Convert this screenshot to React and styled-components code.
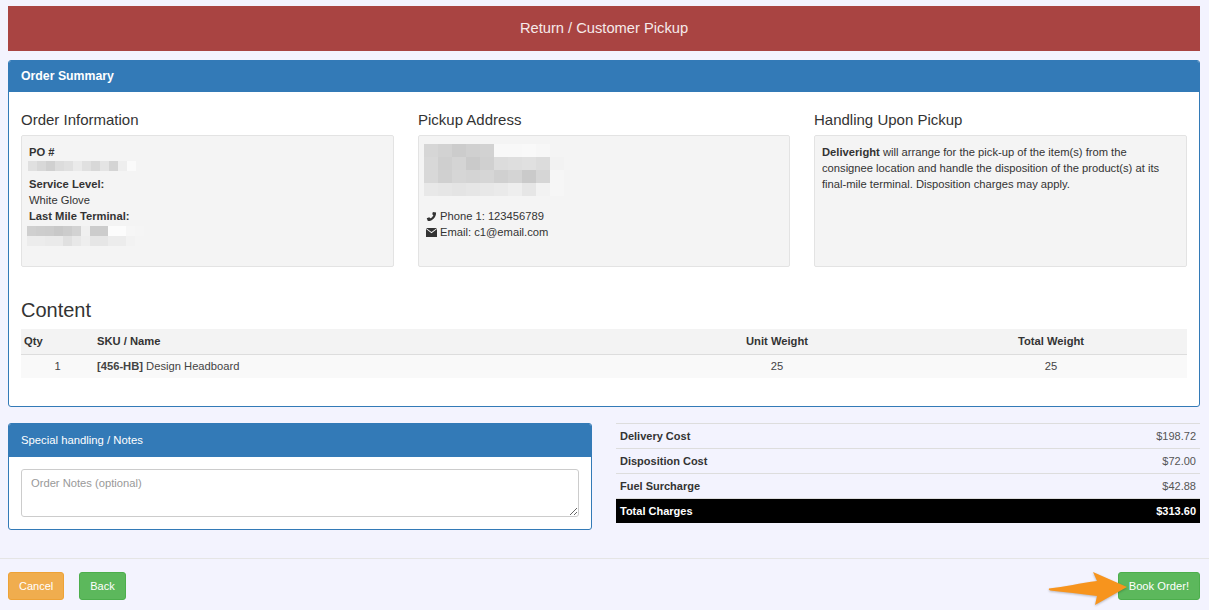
import React from "react";
import styled, { createGlobalStyle } from "styled-components";

const GlobalStyle = createGlobalStyle`
  html, body {
    margin: 0;
    padding: 0;
    background: #f3f3fe;
  }
  body {
    font-family: "Liberation Sans", Arial, sans-serif;
    font-size: 11.2px;
    line-height: 16px;
    color: #333;
  }
  * {
    box-sizing: border-box;
  }
`;

const Page = styled.div`
  width: 1209px;
  height: 610px;
  overflow: hidden;
  padding-top: 6px;
`;

const Content = styled.div`
  padding: 0 9px 0 8px;
`;

const Banner = styled.div`
  height: 45px;
  padding-bottom: 1px;
  background: #a94442;
  color: #f6eaea;
  font-size: 14.7px;
  display: flex;
  align-items: center;
  justify-content: center;
  margin-bottom: 9px;
`;

const Panel = styled.div`
  background: #fff;
  border: 1px solid #337ab7;
  border-radius: 3px;
  overflow: hidden;
  height: ${(p) => p.$height}px;
`;

const PanelHeading = styled.div`
  background: #337ab7;
  color: #fff;
  height: ${(p) => p.$height}px;
  padding: 0 12px 2px;
  display: flex;
  align-items: center;
  font-size: ${(p) => (p.$bold ? "12.3px" : "11.3px")};
  font-weight: ${(p) => (p.$bold ? "bold" : "normal")};
`;

const SummaryBody = styled.div`
  padding: 10px 12px 0;
`;

const Columns = styled.div`
  display: grid;
  grid-template-columns: 373px 372px 373px;
  gap: 24px;
`;

const ColumnTitle = styled.h4`
  margin: 0 0 6px;
  height: 27px;
  padding-top: 8px;
  font-size: 15px;
  line-height: 19px;
  font-weight: normal;
  color: #333;
`;

const Well = styled.div`
  height: 132px;
  background: #f4f4f4;
  border: 1px solid #e3e3e3;
  border-radius: 2px;
  padding: 8px 14px 8px 7px;
`;

const Line = styled.div`
  height: 16px;
  white-space: nowrap;
`;

const Blur = styled.div`
  display: grid;
  grid-template-columns: repeat(${(p) => p.$cols}, ${(p) => p.$size}px);
  grid-auto-rows: ${(p) => p.$rowHeight}px;
  height: ${(p) => p.$height}px;
  margin-left: ${(p) => p.$left || 0}px;
  margin-top: ${(p) => p.$top || 0}px;
  margin-bottom: ${(p) => p.$after || 0}px;
`;

const BlurCell = styled.div`
  background: ${(p) => p.$shade};
`;

const IconLine = styled(Line)`
  display: flex;
  align-items: center;
  gap: 3px;
`;

const Glyph = styled.svg`
  width: 11px;
  height: 11px;
  fill: #333;
  flex: none;
`;

const ContentTitle = styled.h3`
  margin: 32px 0 8px;
  font-size: 20px;
  line-height: 22px;
  font-weight: normal;
  color: #333;
`;

const Table = styled.table`
  width: 100%;
  border-collapse: collapse;
  table-layout: fixed;
`;

const HeadCell = styled.th`
  height: 25px;
  padding: 0 3px;
  background: #f3f3f3;
  border-bottom: 1px solid #ddd;
  font-weight: bold;
  text-align: ${(p) => p.$align || "left"};
`;

const BodyCell = styled.td`
  height: 24px;
  padding: 0 3px;
  background: #f9f9f9;
  color: #444;
  text-align: ${(p) => p.$align || "left"};
`;

const BottomRow = styled.div`
  display: grid;
  grid-template-columns: 584px 584px;
  gap: 24px;
  margin-top: 16px;
`;

const NotesBody = styled.div`
  padding: 12px 12px 0;
`;

const Notes = styled.textarea`
  display: block;
  width: 558px;
  height: 48px;
  padding: 5px 9px;
  border: 1px solid #ccc;
  border-radius: 3px;
  font: 11.2px/16px "Liberation Sans", Arial, sans-serif;
  color: #333;
  background: #fff;
  &::placeholder {
    color: #999;
    opacity: 1;
  }
`;

const ChargeRow = styled.div`
  height: 25px;
  display: flex;
  align-items: center;
  justify-content: space-between;
  padding: 0 4px;
  border-top: 1px solid #ddd;
  color: #555;
  font-size: 11px;
  b {
    color: #333;
  }
`;

const TotalRow = styled(ChargeRow)`
  background: #000;
  color: #fff;
  font-weight: bold;
  background-clip: padding-box;
`;

const Footer = styled.div`
  margin-top: 28px;
  border-top: 1px solid #e5e5e5;
  padding: 13px 9px 0 8px;
  display: flex;
  align-items: flex-start;
  gap: 15px;
`;

const Button = styled.button`
  height: 28px;
  padding: 0 10px;
  border-radius: 3px;
  border: 1px solid ${(p) => (p.$warning ? "#eea236" : "#4cae4c")};
  background: ${(p) => (p.$warning ? "#f0ad4e" : "#5cb85c")};
  color: #fff;
  font: 11px "Liberation Sans", Arial, sans-serif;
  cursor: pointer;
`;

const BookButton = styled(Button)`
  font-size: 11.2px;
`;

const BookWrap = styled.div`
  margin-left: auto;
  position: relative;
`;

const Arrow = styled.svg`
  position: absolute;
  left: -72px;
  top: -3px;
  width: 84px;
  height: 40px;
  filter: drop-shadow(0 1px 1px rgba(0, 0, 0, 0.25));
`;

const blurShades = {
  po: [
    ["#e0e0e0", "#d8d8d8", "#d0d0d0", "#dcdcdc", "#e0e0e0", "#eaeaea", "#e0e0e0", "#d8d8d8", "#e4e4e4", "#d4d4d4", "#eeeeee", "#fafafa"],
  ],
  terminal: [
    ["#cfcfcf", "#cdcdcd", "#cccccc", "#c8c8c8", "#cccccc", "#d2d2d2", "#f0f0f0", "#cccccc", "#cccccc", "#fcfcfc", "#fcfcfc", "#f6f6f6", "#f5f5f5"],
    ["#ececec", "#ececec", "#eaeaea", "#eaeaea", "#e0e0e0", "#e8e8e8", "#eeeeee", "#e6e6e6", "#e6e6e6", "#ececec", "#ececec", "#f2f2f2", "#f4f4f4"],
  ],
  address: [
    ["#d6d6d6", "#d2d2d2", "#cccccc", "#d0d0d0", "#d2d2d2", "#f8f8f8", "#f8f8f8", "#f9f9f9", "#f7f7f7", "#f4f4f4"],
    ["#d8d8d8", "#cfcfcf", "#d4d4d4", "#cacaca", "#d0d0d0", "#dcdcdc", "#dedede", "#e0e0e0", "#dcdcdc", "#f2f2f2"],
    ["#d8d8d8", "#d0d0d0", "#d6d6d6", "#d4d4d4", "#d6d6d6", "#d0d0d0", "#d4d4d4", "#cacaca", "#d6d6d6", "#f6f6f6"],
    ["#e8e8e8", "#e6e6e6", "#e4e4e4", "#e6e6e6", "#e8e8e8", "#eaeaea", "#eeeeee", "#e6e6e6", "#f2f2f2", "#f6f6f6"],
  ],
};

const Pixelated = ({ rows, size, rowHeight, left, top, after }) => (
  <Blur
    $cols={rows[0].length}
    $size={size}
    $rowHeight={rowHeight}
    $height={rows.length * rowHeight}
    $left={left}
    $top={top}
    $after={after}
  >
    {rows.flat().map((shade, i) => (
      <BlurCell key={i} $shade={shade} />
    ))}
  </Blur>
);

const PhoneIcon = () => (
  <Glyph viewBox="0 0 12 12">
    <path d="M7.500 1 L11 1.600 C11.200 6.500 7 11.200 2 11 L0.800 7.800 L3.600 6.800 L4.600 8 C6 7.400 7.400 6 8 4.500 L6.800 3.600 Z" />
  </Glyph>
);

const MailIcon = () => (
  <Glyph viewBox="0 0 12 10">
    <path d="M0 0 H12 L6 4.400 Z" />
    <path d="M0 1.300 V10 H12 V1.300 L6 5.800 Z" />
  </Glyph>
);

const App = () => {
  return (
    <Page>
      <GlobalStyle />
      <Content>
        <Banner>Return / Customer Pickup</Banner>
        <Panel $height={347}>
          <PanelHeading $height={31} $bold>Order Summary</PanelHeading>
          <SummaryBody>
            <Columns>
              <div>
                <ColumnTitle>Order Information</ColumnTitle>
                <Well>
                  <Line><b>PO #</b></Line>
                  <Pixelated rows={blurShades.po} size={9} rowHeight={10} left={-1} top={1} after={5} />
                  <Line><b>Service Level:</b></Line>
                  <Line>White Glove</Line>
                  <Line><b>Last Mile Terminal:</b></Line>
                  <Pixelated rows={blurShades.terminal} size={9} rowHeight={10} left={-2} top={2} />
                </Well>
              </div>
              <div>
                <ColumnTitle>Pickup Address</ColumnTitle>
                <Well>
                  <Pixelated rows={blurShades.address} size={14} rowHeight={13} left={-2} after={12} />
                  <IconLine><PhoneIcon />Phone 1: 123456789</IconLine>
                  <IconLine><MailIcon />Email: c1@email.com</IconLine>
                </Well>
              </div>
              <div>
                <ColumnTitle>Handling Upon Pickup</ColumnTitle>
                <Well>
                  <b>Deliveright</b> will arrange for the pick-up of the item(s) from the consignee location and handle the disposition of the product(s) at its final-mile terminal. Disposition charges may apply.
                </Well>
              </div>
            </Columns>
            <ContentTitle>Content</ContentTitle>
            <Table>
              <colgroup>
                <col style={{ width: 73 }} />
                <col style={{ width: 545 }} />
                <col style={{ width: 276 }} />
                <col style={{ width: 272 }} />
              </colgroup>
              <thead>
                <tr>
                  <HeadCell>Qty</HeadCell>
                  <HeadCell>SKU / Name</HeadCell>
                  <HeadCell $align="center">Unit Weight</HeadCell>
                  <HeadCell $align="center">Total Weight</HeadCell>
                </tr>
              </thead>
              <tbody>
                <tr>
                  <BodyCell $align="center">1</BodyCell>
                  <BodyCell><b>[456-HB]</b> Design Headboard</BodyCell>
                  <BodyCell $align="center">25</BodyCell>
                  <BodyCell $align="center">25</BodyCell>
                </tr>
              </tbody>
            </Table>
          </SummaryBody>
        </Panel>
        <BottomRow>
          <Panel $height={107}>
            <PanelHeading $height={33}>Special handling / Notes</PanelHeading>
            <NotesBody>
              <Notes placeholder="Order Notes (optional)" />
            </NotesBody>
          </Panel>
          <div>
            <ChargeRow><b>Delivery Cost</b><span>$198.72</span></ChargeRow>
            <ChargeRow><b>Disposition Cost</b><span>$72.00</span></ChargeRow>
            <ChargeRow><b>Fuel Surcharge</b><span>$42.88</span></ChargeRow>
            <TotalRow><span>Total Charges</span><span>$313.60</span></TotalRow>
          </div>
        </BottomRow>
      </Content>
      <Footer>
        <Button $warning>Cancel</Button>
        <Button>Back</Button>
        <BookWrap>
          <BookButton>Book Order!</BookButton>
          <Arrow viewBox="0 0 84 40">
            <path d="M3 19.500 C18 18 35 14 51 12 L47 3 L81 18 L49 36 L51 27 C35 25 18 23 4 21.500 Q2 20.500 3 19.500 Z" fill="#f7941d" />
          </Arrow>
        </BookWrap>
      </Footer>
    </Page>
  );
};

export default App;
